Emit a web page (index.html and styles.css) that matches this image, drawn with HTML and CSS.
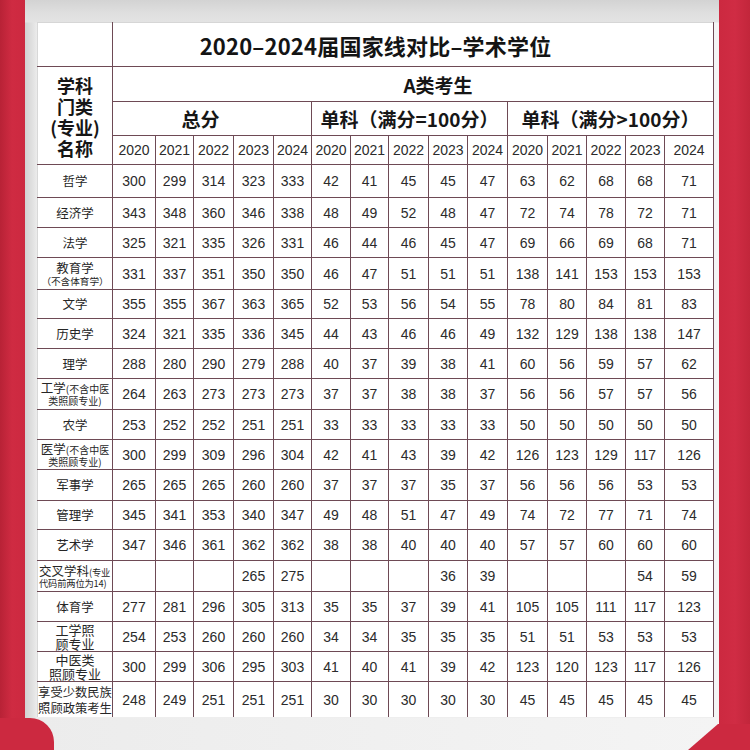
FILE: index.html
```html
<!DOCTYPE html>
<html lang="zh-CN">
<head>
<meta charset="utf-8">
<title>2020-2024届国家线对比-学术学位</title>
<link rel="stylesheet" href="styles.css">
</head>
<body>
<div class="scene">
  <div class="paper">
    <table class="grid">
      <colgroup>
        <col class="w75"><col class="w43"><col class="w38"><col class="w40"><col class="w40"><col class="w38">
        <col class="w39"><col class="w38"><col class="w40"><col class="w39"><col class="w40">
        <col class="w40"><col class="w39"><col class="w39"><col class="w39"><col class="w49">
      </colgroup>
      <tbody>
        <tr class="h44">
          <td class="name top"></td>
          <td class="title top" colspan="15">2020–2024届国家线对比–学术学位</td>
        </tr>
        <tr class="h35">
          <td class="name head-name" rowspan="3">学科<br>门类<br>(专业)<br>名称</td>
          <td class="band" colspan="15">A类考生</td>
        </tr>
        <tr class="h34">
          <td class="group total" colspan="5">总分</td>
          <td class="group" colspan="5">单科（满分=100分）</td>
          <td class="group" colspan="5">单科（满分&gt;100分）</td>
        </tr>
        <tr class="h29 years">
          <td>2020</td><td>2021</td><td>2022</td><td>2023</td><td>2024</td>
          <td>2020</td><td>2021</td><td>2022</td><td>2023</td><td>2024</td>
          <td>2020</td><td>2021</td><td>2022</td><td>2023</td><td>2024</td>
        </tr>
        <tr class="h33"><td class="name">哲学</td><td>300</td><td>299</td><td>314</td><td>323</td><td>333</td><td>42</td><td>41</td><td>45</td><td>45</td><td>47</td><td>63</td><td>62</td><td>68</td><td>68</td><td>71</td></tr>
        <tr class="h30"><td class="name">经济学</td><td>343</td><td>348</td><td>360</td><td>346</td><td>338</td><td>48</td><td>49</td><td>52</td><td>48</td><td>47</td><td>72</td><td>74</td><td>78</td><td>72</td><td>71</td></tr>
        <tr class="h30"><td class="name">法学</td><td>325</td><td>321</td><td>335</td><td>326</td><td>331</td><td>46</td><td>44</td><td>46</td><td>45</td><td>47</td><td>69</td><td>66</td><td>69</td><td>68</td><td>71</td></tr>
        <tr class="h32"><td class="name"><span class="ln">教育学</span><span class="ln sub">（不含体育学）</span></td><td>331</td><td>337</td><td>351</td><td>350</td><td>350</td><td>46</td><td>47</td><td>51</td><td>51</td><td>51</td><td>138</td><td>141</td><td>153</td><td>153</td><td>153</td></tr>
        <tr class="h29"><td class="name">文学</td><td>355</td><td>355</td><td>367</td><td>363</td><td>365</td><td>52</td><td>53</td><td>56</td><td>54</td><td>55</td><td>78</td><td>80</td><td>84</td><td>81</td><td>83</td></tr>
        <tr class="h30"><td class="name">历史学</td><td>324</td><td>321</td><td>335</td><td>336</td><td>345</td><td>44</td><td>43</td><td>46</td><td>46</td><td>49</td><td>132</td><td>129</td><td>138</td><td>138</td><td>147</td></tr>
        <tr class="h30"><td class="name">理学</td><td>288</td><td>280</td><td>290</td><td>279</td><td>288</td><td>40</td><td>37</td><td>39</td><td>38</td><td>41</td><td>60</td><td>56</td><td>59</td><td>57</td><td>62</td></tr>
        <tr class="h31"><td class="name"><span class="ln">工学<span class="sm">(不含中医</span></span><span class="ln sm">类照顾专业)</span></td><td>264</td><td>263</td><td>273</td><td>273</td><td>273</td><td>37</td><td>37</td><td>38</td><td>38</td><td>37</td><td>56</td><td>56</td><td>57</td><td>57</td><td>56</td></tr>
        <tr class="h30"><td class="name">农学</td><td>253</td><td>252</td><td>252</td><td>251</td><td>251</td><td>33</td><td>33</td><td>33</td><td>33</td><td>33</td><td>50</td><td>50</td><td>50</td><td>50</td><td>50</td></tr>
        <tr class="h30"><td class="name"><span class="ln">医学<span class="sm">(不含中医</span></span><span class="ln sm">类照顾专业)</span></td><td>300</td><td>299</td><td>309</td><td>296</td><td>304</td><td>42</td><td>41</td><td>43</td><td>39</td><td>42</td><td>126</td><td>123</td><td>129</td><td>117</td><td>126</td></tr>
        <tr class="h31"><td class="name">军事学</td><td>265</td><td>265</td><td>265</td><td>260</td><td>260</td><td>37</td><td>37</td><td>37</td><td>35</td><td>37</td><td>56</td><td>56</td><td>56</td><td>53</td><td>53</td></tr>
        <tr class="h29"><td class="name">管理学</td><td>345</td><td>341</td><td>353</td><td>340</td><td>347</td><td>49</td><td>48</td><td>51</td><td>47</td><td>49</td><td>74</td><td>72</td><td>77</td><td>71</td><td>74</td></tr>
        <tr class="h31"><td class="name">艺术学</td><td>347</td><td>346</td><td>361</td><td>362</td><td>362</td><td>38</td><td>38</td><td>40</td><td>40</td><td>40</td><td>57</td><td>57</td><td>60</td><td>60</td><td>60</td></tr>
        <tr class="h31"><td class="name left"><span class="ln">交叉学科<span class="xs">(专业</span></span><span class="ln xs">代码前两位为14)</span></td><td></td><td></td><td></td><td>265</td><td>275</td><td></td><td></td><td></td><td>36</td><td>39</td><td></td><td></td><td></td><td>54</td><td>59</td></tr>
        <tr class="h30"><td class="name">体育学</td><td>277</td><td>281</td><td>296</td><td>305</td><td>313</td><td>35</td><td>35</td><td>37</td><td>39</td><td>41</td><td>105</td><td>105</td><td>111</td><td>117</td><td>123</td></tr>
        <tr class="h30"><td class="name two"><span class="ln">工学照</span><span class="ln">顾专业</span></td><td>254</td><td>253</td><td>260</td><td>260</td><td>260</td><td>34</td><td>34</td><td>35</td><td>35</td><td>35</td><td>51</td><td>51</td><td>53</td><td>53</td><td>53</td></tr>
        <tr class="h30"><td class="name two"><span class="ln">中医类</span><span class="ln">照顾专业</span></td><td>300</td><td>299</td><td>306</td><td>295</td><td>303</td><td>41</td><td>40</td><td>41</td><td>39</td><td>42</td><td>123</td><td>120</td><td>123</td><td>117</td><td>126</td></tr>
        <tr class="h36 last"><td class="name two wide"><span class="ln">享受少数民族</span><span class="ln">照顾政策考生</span></td><td>248</td><td>249</td><td>251</td><td>251</td><td>251</td><td>30</td><td>30</td><td>30</td><td>30</td><td>30</td><td>45</td><td>45</td><td>45</td><td>45</td><td>45</td></tr>
      </tbody>
    </table>
  </div>
</div>
</body>
</html>
```
FILE: styles.css
```css
* { box-sizing: border-box; }

html, body {
  margin: 0;
  padding: 0;
}

body {
  width: 750px;
  height: 750px;
  overflow: hidden;
  background: #c9283d;
}

.scene {
  position: relative;
  width: 750px;
  height: 750px;
  display: flex;
  padding-left: 25px;
  background: linear-gradient(90deg, #b82236 0px, #cf2b42 12px, #cc2940 25px, #cc2940 720px, #d02c44 735px, #c2263b 750px);
  overflow: hidden;
}

.scene::after {
  content: "";
  position: absolute;
  left: 0;
  bottom: 0;
  width: 54px;
  height: 32px;
  background: #cc2940;
  border-top-right-radius: 24px;
}

.scene::before {
  content: "";
  position: absolute;
  right: 0;
  bottom: 0;
  width: 62px;
  height: 26px;
  background: #cc2940;
  clip-path: polygon(30px 0, 62px 0, 62px 26px, 0 26px);
  z-index: 2;
}

.paper {
  width: 694px;
  height: 750px;
  padding: 22px 6px 0 12px;
  background:
    linear-gradient(180deg, #d3d3d3 0px, #dedede 12px, #e3e3e3 22px, rgba(0,0,0,0) 23px),
    linear-gradient(90deg, #d2d2d2 0px, #e2e2e2 8px, #ececec 12px, #f4f4f4 100%);
  background-color: #e4e4e4;
}

.grid {
  width: 676px;
  border-collapse: collapse;
  table-layout: fixed;
  background: #ffffff;
  font-family: "Liberation Sans", Arial, "Noto Sans CJK SC", sans-serif;
  font-size: 14px;
  color: #2b2b2b;
}

.w75 { width: 75px; }
.w43 { width: 43px; }
.w38 { width: 38px; }
.w39 { width: 39px; }
.w40 { width: 40px; }
.w49 { width: 49px; }

.grid td {
  border: 1px solid #6e4a55;
  padding: 0;
  text-align: center;
  vertical-align: middle;
  white-space: nowrap;
}

.grid td.top { border-top-color: #d6d6d6; }
.grid td.name { border-left-color: #d8d8d8; }
.grid tr.last td { border-bottom-color: #eeeeee; }

.h44 { height: 44px; }
.h36 { height: 36px; }
.h35 { height: 35px; }
.h34 { height: 34px; }
.h33 { height: 33px; }
.h32 { height: 32px; }
.h31 { height: 31px; }
.h30 { height: 30px; }
.h29 { height: 29px; }

.grid td.title {
  font-family: "Noto Sans CJK SC", sans-serif;
  font-weight: 700;
  font-size: 22px;
  color: #141414;
  padding-right: 75px;
  letter-spacing: 0.2px;
}

.grid td.band {
  font-family: "Noto Sans CJK SC", sans-serif;
  font-weight: 700;
  font-size: 19px;
  color: #161616;
  padding-left: 50px;
}

.grid td.group {
  font-family: "Noto Sans CJK SC", sans-serif;
  font-weight: 700;
  font-size: 19px;
  color: #161616;
}

.grid td.group.total { padding-right: 23px; }

.years td {
  font-size: 14px;
  color: #2b2b2b;
}

.name {
  font-family: "Noto Sans CJK SC", sans-serif;
  font-size: 12.5px;
  line-height: 14px;
  color: #262626;
}

.grid td.name.head-name {
  font-weight: 700;
  font-size: 18px;
  line-height: 21px;
  color: #161616;
  padding-top: 2px;
}

.name .ln { display: block; }

.name .sub {
  font-size: 9.6px;
  line-height: 12px;
}

.name .sm {
  font-size: 10px;
  line-height: 12px;
}

.name .xs {
  font-size: 9.3px;
  line-height: 11px;
  letter-spacing: -0.2px;
}

.name.left .ln { text-align: left; padding-left: 1px; }

.grid td.name.two {
  font-size: 13px;
  line-height: 13.5px;
}

.grid td.name.wide {
  font-size: 12.3px;
  line-height: 16px;
}
```
